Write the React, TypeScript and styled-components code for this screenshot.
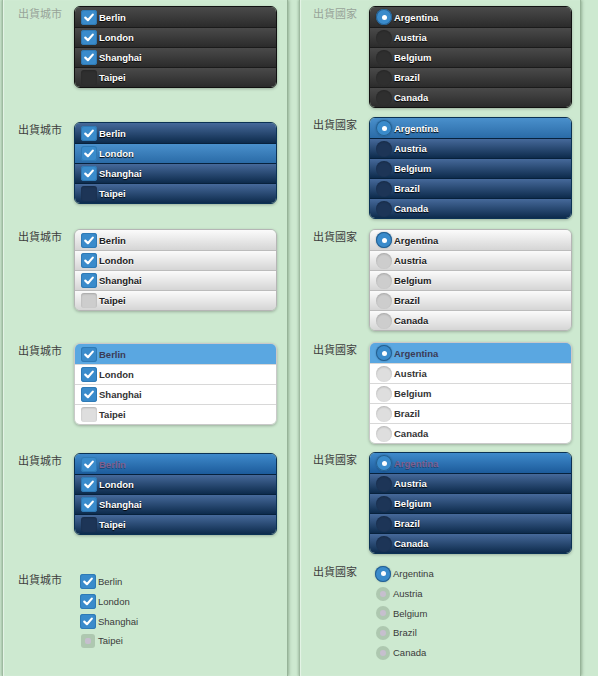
import styled, { createGlobalStyle, css } from 'styled-components';

const GlobalStyle = createGlobalStyle`
  html, body {
    margin: 0;
    padding: 0;
    background: #cde9d0;
    font-family: 'Liberation Sans', Arial, sans-serif;
  }
`;

type Tone = 'a' | 'b' | 'c' | 'd' | 'e';
type RowState = 'up' | 'hover' | 'active';

const tones = {
  a: {
    row: 'linear-gradient(#4a4a4a, #2b2b2b)',
    line: '#1b1b1b',
    edge: '#111',
    text: '#fff',
    shadow: '0 1px 1px #000',
    off: '#2f2f2f',
  },
  b: {
    row: 'linear-gradient(#46699a, #0d2b4c)',
    line: '#07213c',
    edge: '#0b3254',
    text: '#fff',
    shadow: '0 1px 1px #000',
    off: '#1d3557',
  },
  c: {
    row: 'linear-gradient(#fbfbfb, #d5d5d5)',
    line: '#bcbcbc',
    edge: '#b5b5b5',
    text: '#222',
    shadow: '0 1px 0 #fff',
    off: '#cdcdcd',
  },
  d: {
    row: '#fff',
    line: '#d8d8d8',
    edge: '#c9c9c9',
    text: '#333',
    shadow: 'none',
    off: '#dedede',
  },
  e: {
    row: 'linear-gradient(#46699a, #0d2b4c)',
    line: '#07213c',
    edge: '#0b3254',
    text: '#fff',
    shadow: '0 1px 1px #000',
    off: '#1d3557',
  },
};

const Page = styled.div`
  display: flex;
  gap: 11px;
  height: 676px;
  padding-left: 2px;
  overflow: hidden;
`;

const Column = styled.div<{ $pad: number; $width: number }>`
  width: ${(p) => p.$width}px;
  height: 100%;
  padding-left: ${(p) => p.$pad}px;
  box-sizing: border-box;
  border-left: 1px solid #9fbaa1;
  border-right: 1px solid #97b399;
  box-shadow: inset 1px 0 1px #e6f4e7, 1px 0 3px rgba(60, 90, 60, 0.4), -1px 0 2px rgba(60, 90, 60, 0.2);
`;

const Section = styled.div<{ $top: number }>`
  display: flex;
  align-items: flex-start;
  margin-top: ${(p) => p.$top}px;
`;

const Label = styled.div<{ $faded?: boolean }>`
  width: 56px;
  flex: none;
  line-height: 16px;
  font-size: 11px;
  font-family: 'Liberation Sans', 'Noto Sans CJK TC', sans-serif;
  color: ${(p) => (p.$faded ? '#98a499' : '#3e3e3e')};
`;

const Group = styled.div<{ $tone: Tone }>`
  width: 203px;
  box-sizing: border-box;
  border: 1px solid ${(p) => tones[p.$tone].edge};
  border-radius: 6px;
  overflow: hidden;
  box-shadow: 0 1px 3px rgba(0, 0, 0, 0.25);
`;

const rowBg = (tone: Tone, state: RowState) => {
  if (state === 'hover') return 'linear-gradient(#4a90cc, #2a6ba7)';
  if (state === 'active' && tone === 'd') return '#5aa7e1';
  if (state === 'active') return 'linear-gradient(#3f8acb, #1c5b9b)';
  return tones[tone].row;
};

const Row = styled.div<{ $tone: Tone; $state: RowState }>`
  height: 20px;
  box-sizing: border-box;
  display: flex;
  align-items: center;
  gap: 2px;
  padding-left: 6px;
  background: ${(p) => rowBg(p.$tone, p.$state)};
  border-top: 1px solid ${(p) => tones[p.$tone].line};
  &:first-child {
    border-top: none;
  }
  font-size: 9.5px;
  font-weight: bold;
  color: ${(p) => tones[p.$tone].text};
  text-shadow: ${(p) => tones[p.$tone].shadow};
  ${(p) =>
    p.$tone === 'e' &&
    p.$state === 'active' &&
    css`
      color: #7e5f8c;
      text-shadow: 0 1px 0 rgba(20, 40, 70, 0.5);
    `}
  ${(p) =>
    p.$tone === 'd' &&
    p.$state === 'active' &&
    css`
      color: #3b3b55;
    `}
`;

const CheckBox = styled.span<{ $on: boolean; $off: string }>`
  width: 16px;
  height: 15px;
  flex: none;
  border-radius: 3px;
  display: flex;
  align-items: center;
  justify-content: center;
  background: ${(p) => (p.$on ? '#3a8bcb' : p.$off)};
  box-shadow: ${(p) => (p.$on ? 'inset 0 0 0 1px #2f7ab5' : 'inset 0 1px 2px rgba(0,0,0,0.2)')};
`;

const RadioDot = styled.span<{ $on: boolean; $off: string }>`
  width: 16px;
  height: 16px;
  flex: none;
  border-radius: 50%;
  display: flex;
  align-items: center;
  justify-content: center;
  background: ${(p) => (p.$on ? '#3a8bcb' : p.$off)};
  box-shadow: ${(p) => (p.$on ? 'inset 0 0 0 1px #245f90, 0 0 2px rgba(0,0,0,0.3)' : 'inset 0 1px 2px rgba(0,0,0,0.2)')};
  &::after {
    content: '';
    display: ${(p) => (p.$on ? 'block' : 'none')};
    width: 5px;
    height: 5px;
    border-radius: 50%;
    background: #fff;
  }
`;

const PlainList = styled.div`
  display: flex;
  flex-direction: column;
  padding-left: 6px;
`;

const PlainItem = styled.div`
  height: 19.7px;
  display: flex;
  align-items: center;
  gap: 2px;
  font-size: 9.5px;
  color: #3a3a3a;
`;

const PlainOff = styled.span<{ $round?: boolean }>`
  width: 14px;
  height: 14px;
  margin: 0 1px;
  flex: none;
  border-radius: ${(p) => (p.$round ? '50%' : '3px')};
  background: rgba(110, 130, 110, 0.32);
  display: flex;
  align-items: center;
  justify-content: center;
  &::after {
    content: '';
    width: 6px;
    height: 6px;
    border-radius: ${(p) => (p.$round ? '50%' : '2px')};
    background: #c6bfce;
  }
`;

const Check = () => (
  <svg width="10" height="9" viewBox="0 0 10 9">
    <path d="M1.3 4.6 L3.9 7.2 L8.8 1.6" fill="none" stroke="#fff" strokeWidth="2.2" strokeLinecap="round" strokeLinejoin="round" />
  </svg>
);

const cities = ['Berlin', 'London', 'Shanghai', 'Taipei'];
const countries = ['Argentina', 'Austria', 'Belgium', 'Brazil', 'Canada'];

interface GroupProps {
  tone: Tone;
  top: number;
  highlight?: { index: number; state: RowState };
  faded?: boolean;
}

const CityGroup = ({ tone, top, highlight, faded }: GroupProps) => (
  <Section $top={top}>
    <Label $faded={faded}>出貨城市</Label>
    <Group $tone={tone}>
      {cities.map((c, i) => (
        <Row key={c} $tone={tone} $state={highlight && highlight.index === i ? highlight.state : 'up'}>
          <CheckBox $on={i < 3} $off={tones[tone].off}>{i < 3 && <Check />}</CheckBox>
          <span>{c}</span>
        </Row>
      ))}
    </Group>
  </Section>
);

const CountryGroup = ({ tone, top, highlight, faded }: GroupProps) => (
  <Section $top={top}>
    <Label $faded={faded}>出貨國家</Label>
    <Group $tone={tone}>
      {countries.map((c, i) => (
        <Row key={c} $tone={tone} $state={highlight && highlight.index === i ? highlight.state : 'up'}>
          <RadioDot $on={i === 0} $off={tones[tone].off} />
          <span>{c}</span>
        </Row>
      ))}
    </Group>
  </Section>
);

export default function App() {
  return (
    <>
      <GlobalStyle />
      <Page>
        <Column $pad={15} $width={286}>
          <CityGroup tone="a" top={6} faded />
          <CityGroup tone="b" top={34} highlight={{ index: 1, state: 'hover' }} />
          <CityGroup tone="c" top={25} />
          <CityGroup tone="d" top={32} highlight={{ index: 0, state: 'active' }} />
          <CityGroup tone="e" top={28} highlight={{ index: 0, state: 'active' }} />
          <Section $top={37}>
            <Label>出貨城市</Label>
            <PlainList>
              {cities.map((c, i) => (
                <PlainItem key={c}>
                  {i < 3 ? (
                    <CheckBox $on $off="">
                      <Check />
                    </CheckBox>
                  ) : (
                    <PlainOff />
                  )}
                  <span>{c}</span>
                </PlainItem>
              ))}
            </PlainList>
          </Section>
        </Column>
        <Column $pad={13} $width={282}>
          <CountryGroup tone="a" top={6} faded />
          <CountryGroup tone="b" top={9} highlight={{ index: 0, state: 'hover' }} />
          <CountryGroup tone="c" top={10} />
          <CountryGroup tone="d" top={11} highlight={{ index: 0, state: 'active' }} />
          <CountryGroup tone="e" top={8} highlight={{ index: 0, state: 'active' }} />
          <Section $top={10}>
            <Label>出貨國家</Label>
            <PlainList>
              {countries.map((c, i) => (
                <PlainItem key={c}>
                  {i === 0 ? <RadioDot $on $off="" /> : <PlainOff $round />}
                  <span>{c}</span>
                </PlainItem>
              ))}
            </PlainList>
          </Section>
        </Column>
      </Page>
    </>
  );
}
